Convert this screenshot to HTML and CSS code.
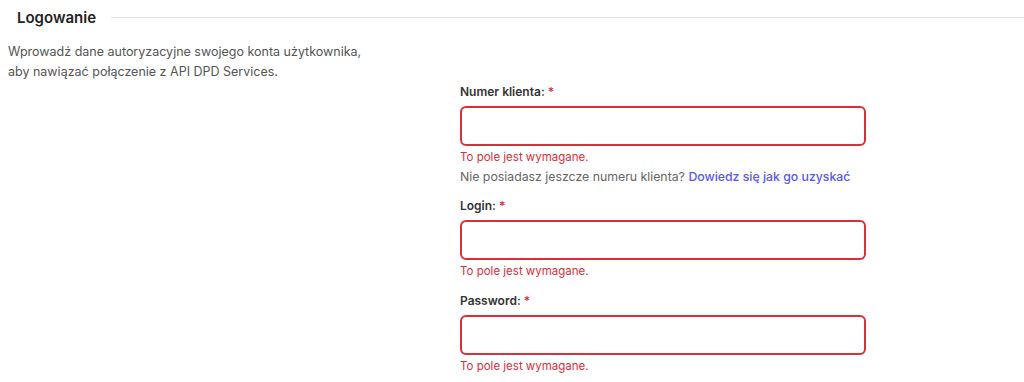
FILE: index.html
```html
<!DOCTYPE html>
<html lang="pl">
<head>
<meta charset="UTF-8" />
<meta name="viewport" content="width=device-width, initial-scale=1" />
<title>Logowanie</title>
<link rel="stylesheet" href="styles.css">
</head>
<body>
    <div class="section-head">
        <h2 class="section-title">Logowanie</h2>
        <span class="section-line"></span>
    </div>

    <div class="section-body">
        <p class="intro">
            Wprowadź dane autoryzacyjne swojego konta użytkownika,<br />
            aby nawiązać połączenie z API DPD Services.
        </p>

        <form class="login-form" novalidate>
            <div class="field">
                <label class="field-label" for="client">Numer klienta: <span class="req">*</span></label>
                <input type="text" id="client" class="field-input invalid" />
                <div class="field-error">To pole jest wymagane.</div>
                <div class="field-help">Nie posiadasz jeszcze numeru klienta? <a href="#" class="help-link">Dowiedz się jak go uzyskać</a></div>
            </div>

            <div class="field">
                <label class="field-label" for="login">Login: <span class="req">*</span></label>
                <input type="text" id="login" class="field-input invalid" />
                <div class="field-error">To pole jest wymagane.</div>
            </div>

            <div class="field">
                <label class="field-label" for="password">Password: <span class="req">*</span></label>
                <input type="password" id="password" class="field-input invalid" />
                <div class="field-error">To pole jest wymagane.</div>
            </div>
        </form>
    </div>
</body>
</html>
```

FILE: styles.css
```css
/* Reset */
* {
    margin: 0;
    padding: 0;
    box-sizing: border-box;
}

body {
    font-family: 'Inter', 'Noto Sans', sans-serif;
    background: #fff;
    color: #333;
}

/* Section header */
.section-head {
    display: flex;
    align-items: center;
    gap: 15px;
    height: 34px;
    padding-left: 17px;
}

.section-title {
    font-size: 15px;
    font-weight: 600;
    color: #222;
}

.section-line {
    flex: 1;
    height: 1px;
    background-color: #e6e6e6;
}

/* Body: intro on the left, form on the right */
.section-body {
    display: flex;
    margin-top: 8px;
}

.intro {
    width: 460px;
    padding-left: 8px;
    font-size: 12.5px;
    line-height: 20px;
    color: #555;
}

.login-form {
    width: 406px;
    margin-top: 40px;
}

/* Fields */
.field {
    margin-bottom: 10px;
}

.field-label {
    display: block;
    font-size: 12px;
    font-weight: 600;
    line-height: 19px;
    color: #333;
    margin-bottom: 5px;
}

.req {
    color: #dc2d3c;
}

.field-input {
    display: block;
    width: 100%;
    height: 40px;
    padding: 0 12px;
    font: inherit;
    font-size: 13px;
    border: 1px solid #ccc;
    border-radius: 6px;
    background: #fff;
    outline: none;
}

.field-input.invalid {
    border: 2px solid #dc2d3c;
}

.field-error {
    margin-top: 2px;
    font-size: 11.5px;
    line-height: 19px;
    color: #dc2d3c;
}

.field-help {
    font-size: 12.3px;
    line-height: 19px;
    color: #666;
}

.help-link {
    color: #5558f2;
    font-weight: 500;
    text-decoration: none;
}
```
